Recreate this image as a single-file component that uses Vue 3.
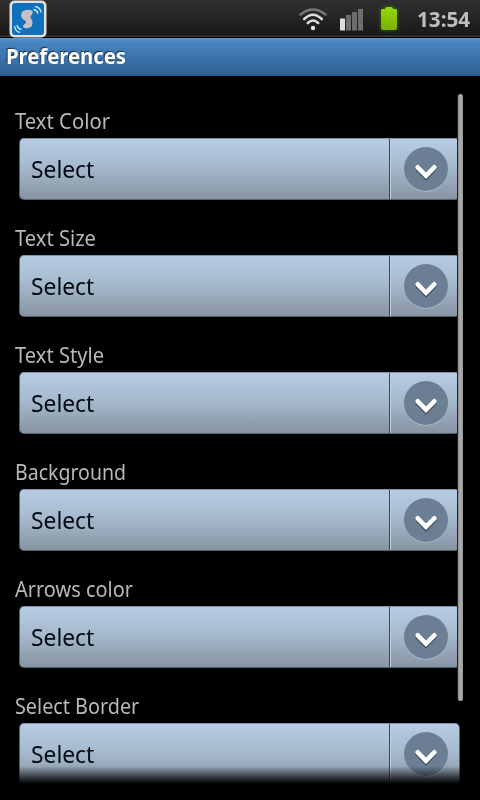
<script setup>
const preferences = [
  { name: 'Text Color', width: 0.92 },
  { name: 'Text Size', width: 0.915 },
  { name: 'Text Style', width: 0.915 },
  { name: 'Background', width: 0.887 },
  { name: 'Arrows color', width: 0.907 },
  { name: 'Select Border', width: 0.9 }
]
</script>

<template>
  <main class="screen">
    <header class="status">
      <svg class="app-icon" width="38" height="38" viewBox="0 0 38 38">
        <rect x=".5" y=".5" width="37" height="37" rx="5" fill="#e3e0e2" />
        <rect x="3" y="3" width="32" height="32" rx="3" fill="#1271bd" />
        <path d="M23 10.500C20 9 14 9.500 12.500 13c-1 3 0 5.500 2.500 7 2 1 2.500 2 1.500 3.500-1 1-2.500 1-2.500 3 .5 2.500 7.500 2.500 9-1 1-3 .5-5-1-7-1-1.500-.5-2.500.5-3.500 1.500-1.500 1.500-3.500.5-4.500z" fill="#c5c2c5" />
        <path d="M24.500 9.500c3 .5 4 2 4.500 4M26 6.500c3.500.5 5.500 2.500 6 6M12.500 29.500c-3-.5-4-2-4.500-4.500M11 32.500c-3.500-.5-5-3-5.500-6.500" fill="none" stroke="#cbeaf6" stroke-width="1.300" />
      </svg>
      <div class="indicators">
        <svg class="wifi" width="30" height="26" viewBox="0 0 30 26" fill="none" stroke-linecap="round">
          <path d="M2.500 7.500Q15-2.500 27.500 7.500" stroke="#777" stroke-width="2.400" />
          <path d="M6.200 12Q15 3.500 23.800 12M9.800 16Q15 11 20.200 16" stroke="#ddd" stroke-width="2.600" />
          <circle cx="15" cy="21" r="2.200" fill="#e5e5e5" />
        </svg>
        <svg class="signal" width="24" height="22" viewBox="0 0 24 22">
          <path d="M0 9.500h5v12H0z" fill="#dedede" />
          <path d="M6 6h5v15.500H6zM12 3h5v18.500h-5zM18 0h5v21.500h-5z" fill="#6d6d6d" />
        </svg>
        <svg class="battery" width="18" height="24" viewBox="0 0 18 24">
          <defs><linearGradient id="charge" x2="0" y2="1"><stop stop-color="#94d80a" /><stop offset="1" stop-color="#7ab000" /></linearGradient></defs>
          <path d="M2 2h3q0-2 2-2h4q2 0 2 2h3q1 0 1 2v6q-1 1 0 2v9q0 2-2 2H3q-2 0-2-2v-9q1-1 0-2V4q0-2 1-2z" fill="url(#charge)" />
        </svg>
        <span class="time">13:54</span>
      </div>
    </header>
    <h1 class="title"><span>Preferences</span></h1>
    <section class="list">
      <div v-for="item in preferences" :key="item.name" class="preference">
        <label class="label"><span :style="{ transform: `scaleX(${item.width})` }">{{ item.name }}</span></label>
        <button class="select">
          <span class="value"><span>Select</span></span>
          <span class="arrow">
            <svg width="46" height="46" viewBox="0 0 46 46">
              <circle cx="23" cy="23.700" r="22" fill="#b5c4d4" />
              <circle cx="23" cy="23" r="22" fill="#6b7e93" />
              <path d="M14.700 23l8.300 8.500 8.300-8.500" fill="none" stroke="#3b4957" stroke-width="4.500" stroke-linecap="round" />
              <path d="M14.700 21.300l8.300 8.500 8.300-8.500" fill="none" stroke="#fff" stroke-width="4.600" stroke-linecap="round" />
            </svg>
          </span>
        </button>
      </div>
      <div class="scrollbar"></div>
      <div class="fade"></div>
    </section>
  </main>
</template>

<style>
body { background: #000; overflow: hidden; }
</style>
<style scoped>
* { box-sizing: border-box; }
.screen { width: 480px; height: 800px; overflow: hidden; background: #000; font-family: "Noto Sans", "Open Sans", sans-serif; display: flex; flex-direction: column; }
.status { height: 38px; flex: none; padding-left: 9px; display: flex; justify-content: space-between; background: linear-gradient(#303030, #191919 35px, #3d3835 36px, #3d3835 37px, #000 37px); }
.indicators { display: flex; align-items: flex-start; }
.wifi { margin: 7px 12px 0 0; }
.signal { margin: 9px 16px 0 0; }
.battery { margin: 7px 19px 0 0; filter: drop-shadow(0 0 2px #3c7200); }
.time { width: 63px; font-size: 21px; line-height: 38px; font-weight: 700; color: #bebebe; transform: scaleX(.985); transform-origin: 0 0; }
.title { margin: 0; height: 38px; flex: none; padding: 0 6px; font-size: 22px; line-height: 34px; color: #fff; background: linear-gradient(#5795d0, #4684bf 5px, #306093 37px, #254b75); text-shadow: -1px -1px 1px #18304b; }
.title span { display: inline-block; transform: scaleX(.922); transform-origin: 0 0; }
.list { position: relative; height: 724px; padding: 31px 20px 0; overflow: hidden; }
.preference { height: 117px; }
.label { display: block; height: 31px; margin-left: -5px; font-size: 22px; line-height: 27px; color: #b8b8b8; }
.label span, .value span { display: inline-block; white-space: nowrap; transform-origin: 0 0; }
.value span { transform: scaleX(.95); }
.select { display: flex; width: 441px; height: 62px; margin-left: -1px; padding: 0; border: 1px solid #56616d; border-top-color: #8293a4; border-radius: 5px; background: linear-gradient(#b7cce4, #a8bccf 42%, #8794a3); font: inherit; color: #030b15; }
.value { width: 370px; padding-left: 11px; text-align: left; font-size: 24px; line-height: 60px; border-right: 1px solid #3c4650; }
.arrow { display: flex; flex: 1; padding: 7px 0 0 12px; border-left: 1px solid #c1d0df; }
.scrollbar { position: absolute; left: 458px; top: 18px; width: 5px; height: 607px; border-radius: 3px; background: linear-gradient(90deg, #8b8b8b, #b0b0b0 40%, #999); box-shadow: -1px 0 #222; }
.fade { position: absolute; left: 0; right: 0; top: 690px; height: 34px; background: linear-gradient(transparent, #000 18px); }
</style>
